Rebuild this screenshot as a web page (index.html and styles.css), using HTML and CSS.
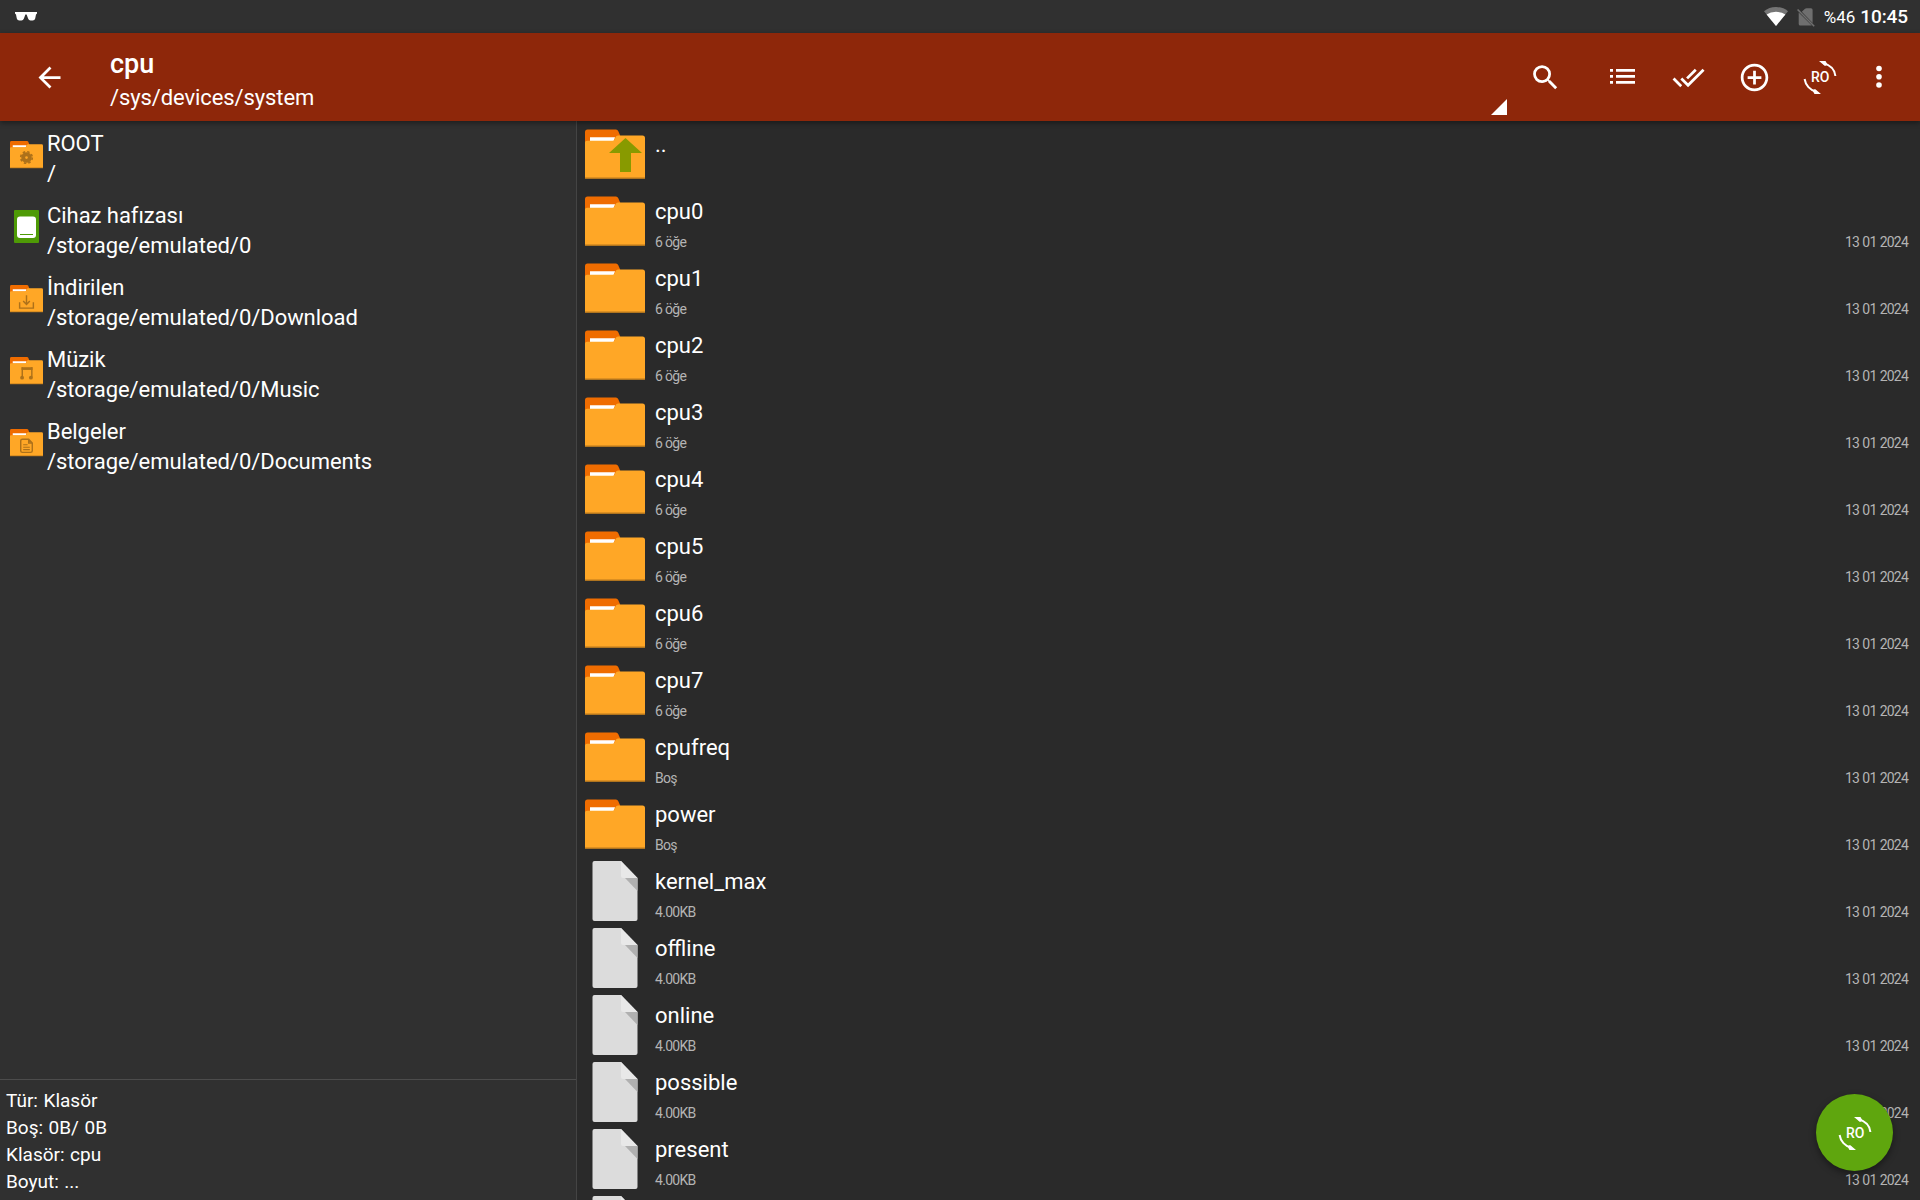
FILE: index.html
```html
<!DOCTYPE html>
<html lang="tr">
<head>
  <meta charset="UTF-8" />
  <meta name="viewport" content="width=device-width, initial-scale=1.0" />
  <title>cpu</title>
  <link rel="stylesheet" href="styles.css">
</head>
<body>
  <svg class="defs" width="0" height="0">
    <symbol id="folder" viewBox="0 0 60 60">
      <path fill="#ef6c00" d="M0 20V8q0-2.500 2.500-2.500h28.500q1.500 0 2.200 1.500l3 7V20z"/>
      <path fill="#fff" d="M5 13.200h25l-1.500 4H5z"/>
      <path fill="#ffa726" d="M0 18.500q0-1.700 2-1.700h25.500q1.500 0 2.200-1.500l.8-2q.8-1.800 2.500-1.800h24.500q2.500 0 2.500 2.500V54.500H0z"/>
      <path fill="#b9791c" d="M0 53.500h60v1.300H0z"/>
    </symbol>
    <symbol id="file" viewBox="0 0 60 60">
      <path fill="#dcdcdc" d="M9.500 0h26.500L52.500 17v41q0 2-2 2h-41q-2 0-2-2V2q0-2 2-2z"/>
      <path fill="#b0b0b0" d="M40 17h12.500v13z"/>
      <path fill="#e8e8e8" d="M36 0l16.500 17H38q-2 0-2-2z"/>
    </symbol>
    <symbol id="rotate" viewBox="0 0 36 36">
      <path fill="none" stroke="#fff" stroke-width="2" d="M21.500 4.200C28 6 32.800 10 33.400 17M2.600 20C3.500 26 8 31.500 14.500 32.800"/>
      <path fill="#fff" d="M17 2h6.500l2 3.600-2.500 1.400zM19 35h-6.500l-2-3.600 2.500-1.400z"/>
    </symbol>
  </svg>

  <div class="status">
    <svg class="glasses" width="22" height="9" viewBox="0 0 22 9"><path fill="#fff" d="M0 0h22v1.500l-1 1-.8 4q-.5 2-2.500 2h-2.200q-1.700 0-2.300-1.700L11.700 2.700q-.7-1-1.400 0L8.800 6.800Q8.200 8.500 6.500 8.500H4.300q-2 0-2.500-2L1 2.500l-1-1z"/></svg>
    <div class="status-right">
      <svg class="wifi" width="24" height="19" viewBox="0 0 24 19"><path fill="#757575" d="M12 19L0 4.300Q5 0 12 0t12 4.300z"/><path fill="#fff" d="M12 19L2.600 7.500Q6.500 4.800 12 4.800t9.400 2.700z"/></svg>
      <svg class="sim" width="18" height="19" viewBox="0 0 18 19"><path fill="#6f6f6f" d="M4.800 3.800L8 .8Q8.600.3 9.500.3H14q1.600 0 1.600 1.600v13zM1.700 4.500L14.800 17.600H3.300q-1.600 0-1.600-1.600z"/><path stroke="#6f6f6f" stroke-width="1.600" d="M.6 1.500l16.600 16.800"/></svg>
      <span class="battery">%46</span>
      <span class="clock">10:45</span>
    </div>
  </div>

  <div class="toolbar">
    <svg class="back" width="33" height="33" viewBox="0 0 24 24"><path fill="#fff" d="M20 11H7.830l5.590-5.590L12 4l-8 8 8 8 1.410-1.410L7.830 13H20z"/></svg>
    <div class="title">
      <div class="title-name">cpu</div>
      <div class="title-path">/sys/devices/system</div>
    </div>
    <svg class="corner" width="16" height="16" viewBox="0 0 16 16"><path fill="#fff" d="M16 0v16H0z"/></svg>
    <div class="actions">
      <svg class="search" width="33" height="33" viewBox="0 0 24 24"><path fill="#fff" d="M15.500 14h-.79l-.28-.27A6.471 6.471 0 0 0 16 9.500 6.500 6.500 0 1 0 9.500 16c1.610 0 3.090-.59 4.230-1.570l.27.28v.79l5 4.990L20.490 19l-4.990-5zm-6 0a4.500 4.500 0 1 1 0-9 4.500 4.500 0 0 1 0 9z"/></svg>
      <svg class="list-icon" width="25" height="17" viewBox="0 0 25 17"><path fill="#fff" d="M0 0h3v2.800H0zM6 0h19v2.800H6zM0 6h3v2.800H0zM6 6h19v2.800H6zM0 12h3v2.800H0zM6 12h19v2.800H6z"/></svg>
      <svg class="check" width="33" height="33" viewBox="0 0 24 24"><path fill="#fff" d="M18 7l-1.410-1.410-6.340 6.340 1.410 1.410L18 7zm4.240-1.410L11.660 16.170 7.480 12l-1.410 1.410L11.660 19l12-12-1.420-1.410zM.41 13.410L6 19l1.410-1.410L1.830 12 .41 13.410z"/></svg>
      <svg class="add" width="33" height="33" viewBox="0 0 24 24"><path fill="#fff" d="M13 7h-2v4H7v2h4v4h2v-4h4v-2h-4V7zm-1-5C6.480 2 2 6.480 2 12s4.480 10 10 10 10-4.480 10-10S17.520 2 12 2zm0 18c-4.410 0-8-3.590-8-8s3.590-8 8-8 8 3.590 8 8-3.590 8-8 8z"/></svg>
      <svg class="ro" width="36" height="36"><use href="#rotate"/><text x="18.300" y="23" text-anchor="middle" class="ro-text">RO</text></svg>
      <svg class="more" width="6" height="24" viewBox="0 0 6 24"><g fill="#fff"><circle cx="3" cy="3.500" r="2.800"/><circle cx="3" cy="11.800" r="2.800"/><circle cx="3" cy="20" r="2.800"/></g></svg>
    </div>
  </div>

  <div class="main">
    <div class="sidebar">
      <div class="places">
        <div class="place">
          <svg class="place-icon" viewBox="0 0 60 60"><use href="#folder"/><circle cx="30" cy="35.500" r="6" fill="none" stroke="#ad711a" stroke-width="7"/><circle cx="30" cy="35.500" r="10.500" fill="none" stroke="#ad711a" stroke-width="3" stroke-dasharray="4.500 3.750"/></svg>
          <div>ROOT<br>/</div>
        </div>
        <div class="place">
          <svg class="place-icon" viewBox="0 0 33 33"><rect x="4" width="25" height="33" rx="1" fill="#4e9a06"/><rect x="7" y="6.500" width="19" height="21.500" rx="3" fill="#fff"/><path stroke="#4e9a06" d="M10 24.500h13"/></svg>
          <div>Cihaz hafızası<br>/storage/emulated/0</div>
        </div>
        <div class="place">
          <svg class="place-icon" viewBox="0 0 60 60"><use href="#folder"/><path fill="none" stroke="#ad711a" stroke-width="2.600" d="M17.500 37v10.500h25V37M30 24v17M24 34.500l6 6.500 6-6.500"/></svg>
          <div>İndirilen<br>/storage/emulated/0/Download</div>
        </div>
        <div class="place">
          <svg class="place-icon" viewBox="0 0 60 60"><use href="#folder"/><path fill="#ad711a" d="M21 24h20v5H21z"/><path fill="none" stroke="#ad711a" stroke-width="2.600" d="M22.300 24v19M39.700 24v19"/><circle cx="22" cy="43" r="3.500" fill="#ad711a"/><circle cx="38" cy="43" r="3.500" fill="#ad711a"/></svg>
          <div>Müzik<br>/storage/emulated/0/Music</div>
        </div>
        <div class="place">
          <svg class="place-icon" viewBox="0 0 60 60"><use href="#folder"/><path fill="none" stroke="#ad711a" stroke-width="2.600" d="M22.500 24H34l6.500 7v14q0 3-3 3h-15q-3 0-3-3V27q0-3 3-3zM34 24v7h6.500"/><path stroke="#ad711a" stroke-width="2" d="M24 34h8M24 38.500h12M24 43h12"/></svg>
          <div>Belgeler<br>/storage/emulated/0/Documents</div>
        </div>
      </div>
      <div class="info">Tür: Klasör<br>Boş: 0B/ 0B<br>Klasör: cpu<br>Boyut: ...</div>
    </div>

    <div class="files" id="files">
      <div class="row">
        <svg class="icon" viewBox="0 0 60 60"><use href="#folder"/><path fill="#889a00" d="M40.500 14L57 29H46v19H35V29H24z"/></svg>
        <div class="details"><div class="name">..</div></div>
      </div>
    </div>
  </div>

  <div class="fab"><svg width="36" height="36"><use href="#rotate"/><text x="18.300" y="23" text-anchor="middle" class="ro-text">RO</text></svg></div>

  <script>
    const entries = [
      ['cpu0', '6 öğe'], ['cpu1', '6 öğe'], ['cpu2', '6 öğe'], ['cpu3', '6 öğe'],
      ['cpu4', '6 öğe'], ['cpu5', '6 öğe'], ['cpu6', '6 öğe'], ['cpu7', '6 öğe'],
      ['cpufreq', 'Boş'], ['power', 'Boş'],
      ['kernel_max', '4.00KB'], ['offline', '4.00KB'], ['online', '4.00KB'],
      ['possible', '4.00KB'], ['present', '4.00KB'], ['', '']
    ];

    document.getElementById('files').innerHTML += entries.map(([name, info], i) => `
      <div class="row">
        <svg class="icon"><use href="#${i < 10 ? 'folder' : 'file'}"/></svg>
        <div class="details">
          <div class="name">${name}</div>
          <div class="meta"><span class="size">${info}</span><span class="date">${name ? '13 01 2024' : ''}</span></div>
        </div>
      </div>`).join('');
  </script>
</body>
</html>
```
FILE: styles.css
```css
* {
  box-sizing: border-box;
}
body {
  margin: 0;
  height: 1200px;
  overflow: hidden;
  display: flex;
  flex-direction: column;
  font-family: Roboto, sans-serif;
  background: #2a2a2a;
  color: #fff;
}
svg {
  display: block;
  flex: none;
}
.defs {
  position: absolute;
}
.status {
  height: 33px;
  flex: none;
  background: #303030;
  display: flex;
  justify-content: space-between;
  padding: 0 12px 0 15px;
}
.glasses {
  margin-top: 12px;
}
.status-right {
  display: flex;
  line-height: 34px;
}
.wifi {
  margin-top: 7px;
}
.sim {
  margin: 8px 9px 0 9px;
}
.battery {
  font-size: 17px;
  margin-right: 5px;
}
.clock {
  font-size: 19px;
  font-weight: 500;
  letter-spacing: -0.100px;
}
.toolbar {
  height: 88px;
  flex: none;
  background: #8e270a;
  display: flex;
  position: relative;
  box-shadow: 0 2px 5px rgba(0, 0, 0, 0.4);
}
.back {
  margin: 28px 0 0 33px;
}
.title {
  flex: 1;
  padding: 14px 0 0 44px;
}
.title-name {
  font-size: 27px;
  font-weight: 500;
  line-height: 34px;
}
.title-path {
  font-size: 22px;
  line-height: 34px;
  letter-spacing: -0.100px;
}
.corner {
  margin: 66px 22px 0 0;
}
.actions {
  display: flex;
  align-items: center;
  padding-right: 38px;
}
.list-icon {
  margin-left: 48px;
}
.check {
  margin-left: 37px;
}
.add {
  margin-left: 33px;
}
.ro {
  margin-left: 31px;
}
.more {
  margin-left: 38px;
}
.ro-text {
  font-family: Roboto, sans-serif;
  font-size: 14px;
  font-weight: 500;
  fill: #fff;
}
.main {
  flex: 1;
  min-height: 0;
  display: flex;
}
.sidebar {
  width: 577px;
  background: #303030;
  border-right: 1px solid #444;
  display: flex;
  flex-direction: column;
  justify-content: space-between;
}
.place {
  height: 72px;
  display: flex;
  padding: 8px 0 0 10px;
  font-size: 22px;
  line-height: 30px;
  letter-spacing: -0.050px;
}
.place-icon {
  width: 33px;
  height: 33px;
  margin: 9px 4px 0 0;
}
.info {
  height: 121px;
  border-top: 1px solid #4c4c4c;
  padding: 7px 6px 0;
  font-size: 19px;
  line-height: 27px;
  word-spacing: 0.800px;
}
.files {
  flex: 1;
  overflow: hidden;
}
.row {
  height: 67px;
  display: flex;
  padding: 3px 12px 0 8px;
}
.icon {
  width: 60px;
  height: 60px;
}
.details {
  flex: 1;
  padding-left: 10px;
}
.name {
  font-size: 22px;
  line-height: 42px;
  height: 40px;
}
.meta {
  display: flex;
  justify-content: space-between;
  font-size: 14px;
  line-height: 22px;
  color: #b4b4b4;
}
.size {
  letter-spacing: -0.700px;
}
.date {
  letter-spacing: -0.800px;
  word-spacing: 0.600px;
}
.fab {
  position: absolute;
  left: 1816px;
  top: 1094px;
  width: 77px;
  height: 77px;
  border-radius: 50%;
  background: #5fa60e;
  display: flex;
  align-items: center;
  justify-content: center;
  box-shadow: 0 3px 7px rgba(0, 0, 0, 0.4);
}
```
